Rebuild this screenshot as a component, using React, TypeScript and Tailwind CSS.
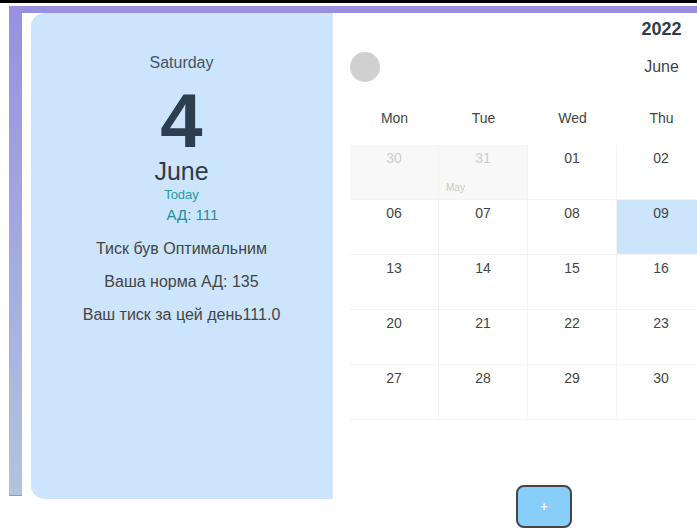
import React from 'react';

type Day = { n: string; muted?: boolean; label?: string; active?: boolean };

const weekDays = ['Mon', 'Tue', 'Wed', 'Thu', 'Fri', 'Sat', 'Sun'];

// June 2022 laid out Monday-first
const weeks: Day[][] = [
  [
    { n: '30', muted: true },
    { n: '31', muted: true, label: 'May' },
    { n: '01' },
    { n: '02' },
    { n: '03' },
    { n: '04' },
    { n: '05' },
  ],
  [{ n: '06' }, { n: '07' }, { n: '08' }, { n: '09', active: true }, { n: '10' }, { n: '11' }, { n: '12' }],
  [{ n: '13' }, { n: '14' }, { n: '15' }, { n: '16' }, { n: '17' }, { n: '18' }, { n: '19' }],
  [{ n: '20' }, { n: '21' }, { n: '22' }, { n: '23' }, { n: '24' }, { n: '25' }, { n: '26' }],
  [{ n: '27' }, { n: '28' }, { n: '29' }, { n: '30' }, { n: '01', muted: true }, { n: '02', muted: true }, { n: '03', muted: true }],
];

function DayCell({ day }: { day: Day }) {
  const bg = day.active ? 'bg-[#cce5fc]' : day.muted ? 'bg-[#f8f8f8]' : 'bg-white';
  return (
    <div className={`flex h-[55px] w-[89px] flex-col border-r border-b border-[#f3f3f3] ${bg}`}>
      <span
        className={`pt-[3px] text-center text-[14px] leading-[20px] ${
          day.muted ? 'text-[#cccccc]' : 'text-[#444444]'
        }`}
      >
        {day.n}
      </span>
      {day.label && (
        <span className="mt-auto mb-[5px] pl-[7px] text-[10px] leading-[12px] text-[#c8c8c8]">
          {day.label}
        </span>
      )}
    </div>
  );
}

export default function App() {
  return (
    <div
      className="h-[529px] w-full overflow-hidden bg-white"
      style={{ fontFamily: '"Liberation Sans", Arial, sans-serif' }}
    >
      <div className="h-[3px] bg-black" />
      <div className="ml-[9px] mt-[3px] h-[490px] border-b border-[#9a8fd4] bg-gradient-to-b from-[#9990e0] to-[#b0c4de] pl-[13px] pt-[7px]">
        <div className="flex w-[1000px] bg-white pl-[9px]">
          {/* Selected day summary */}
          <div className="flex h-[486px] w-[302px] shrink-0 flex-col items-center rounded-l-[14px] border-r border-[#dcedff] bg-[#cce5fc] pt-[40px] text-[#444444]">
            <span className="text-[16px] leading-[20px] text-[#4b5260]">Saturday</span>
            <span className="mt-[12px] text-[76px] font-bold leading-[72px] text-[#2c3e50]">4</span>
            <span className="text-[25px] leading-[28px] text-[#333a44]">June</span>
            <span className="mt-[2px] text-[13px] leading-[16px] text-[#2a9aa3]">Today</span>
            <span className="mt-[3px] pl-[22px] text-[15px] leading-[18px] text-[#1f8d9b]">АД: 111</span>
            <span className="mt-[16px] text-[16px] leading-[18px]">Тиск був Оптимальним</span>
            <span className="mt-[15px] text-[16px] leading-[18px]">Ваша норма АД: 135</span>
            <span className="mt-[15px] text-[16px] leading-[18px]">Ваш тиск за цей день111.0</span>
          </div>

          {/* Month calendar */}
          <div className="flex flex-col pl-[17px] pt-[4px]">
            <div className="w-[623px] text-center text-[18px] font-bold leading-[24px] text-[#2c3e50]">2022</div>
            <div className="mt-[11px] flex h-[30px] w-[623px] items-center">
              <button className="h-[30px] w-[30px] rounded-full bg-[#d0d0d0]" />
              <span className="flex-1 text-center text-[16px] text-[#444444]">June</span>
              <button className="h-[30px] w-[30px] rounded-full bg-[#d0d0d0]" />
            </div>
            <div className="mt-[26px] flex">
              {weekDays.map((d) => (
                <span key={d} className="w-[89px] text-center text-[14px] leading-[20px] text-[#444444]">
                  {d}
                </span>
              ))}
            </div>
            <div className="mt-[17px] flex flex-col">
              {weeks.map((week, i) => (
                <div key={i} className="flex">
                  {week.map((day, j) => (
                    <DayCell key={j} day={day} />
                  ))}
                </div>
              ))}
            </div>
            <button className="ml-[166px] mt-[65px] flex h-[43px] w-[56px] items-center justify-center rounded-[8px] border-2 border-[#454545] bg-[#87cefa] text-[12px] font-bold text-white">
              +
            </button>
          </div>
        </div>
      </div>
    </div>
  );
}
